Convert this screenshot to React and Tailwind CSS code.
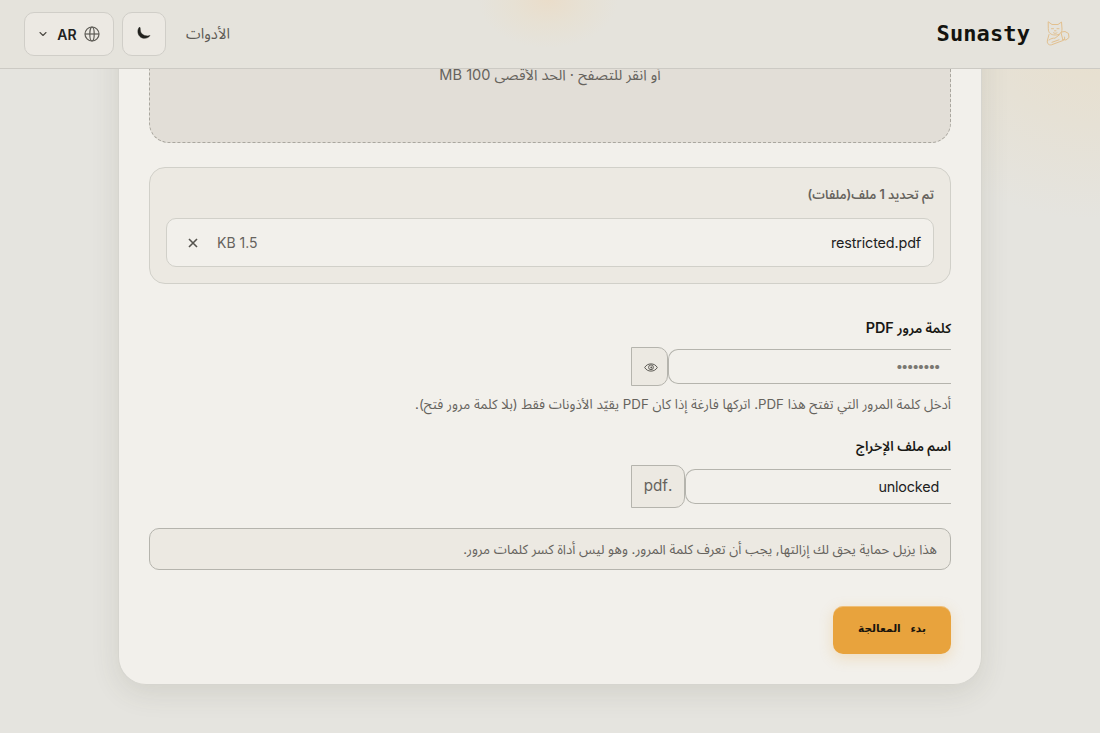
import React from 'react';
import { ChevronDown } from 'lucide-react';

const FILES = [{ name: 'restricted.pdf', size: '1.5 KB' }];

export default function App() {
  return (
    <div
      dir="rtl"
      className="h-[733px] overflow-hidden bg-[#e5e4df] bg-[radial-gradient(ellipse_230px_190px_at_1100px_30px,#e8dfcd_0%,#e6e1d5_50%,#e5e4df_100%)] font-['Inter','Noto_Sans_Arabic','Noto_Sans','DejaVu_Sans',sans-serif] text-[#21211d]"
    >
      <Header />
      <main className="-mt-[69px] px-[118px]">
        <section className="h-[685px] rounded-b-[28px] border border-t-0 border-[#d6d5cf] bg-[#f2f0eb] px-[30px] shadow-[0_8px_28px_rgba(70,70,50,0.12)]">
          <div className="h-[143px] rounded-b-[20px] border border-t-0 border-dashed border-[#aaa79f] bg-[#e2ded7] pt-16 text-center">
            <p className="text-[14.55px] leading-[22px] text-[#66635d]">أو انقر للتصفح · الحد الأقصى 100 MB</p>
          </div>

          <FileList files={FILES} />

          <Field
            label={
              <>
                كلمة مرور <span className="text-[14.4px]">PDF</span>
              </>
            }
            className="mt-[34px]"
          >
            <div className="mt-[9px] flex h-[39px] w-[320px] items-center">
              <div className="flex h-[35px] flex-1 items-center rounded-l-[10px] border border-r-0 border-[#b5b4ad] px-3 text-[#7a7872]">
                <span className="text-[13px] tracking-[-1.9px]">••••••••</span>
              </div>
              <button className="flex h-[39px] w-[37px] items-center justify-center rounded-r-[10px] border border-[#b5b4ad] bg-[#ece9e2] text-[#5d5b55]">
                <EyeIcon />
              </button>
            </div>
            <p className="mt-2 text-[13.32px] leading-5 text-[#66635d]">
              أدخل كلمة المرور التي تفتح هذا PDF. اتركها فارغة إذا كان PDF يقيّد الأذونات فقط (بلا كلمة مرور فتح).
            </p>
          </Field>

          <Field label="اسم ملف الإخراج" className="mt-[22px]">
            <div className="mt-[9px] flex h-[43px] w-[320px] items-center">
              <div className="flex h-[35px] flex-1 items-center rounded-l-[10px] border border-r-0 border-[#b5b4ad] px-3 text-[14.4px] tracking-[-0.2px]">
                unlocked
              </div>
              <span className="flex h-[43px] w-[54px] items-center justify-center rounded-r-[10px] border border-[#b5b4ad] bg-[#ece9e2] text-[15.2px] text-[#66635d]">
                .pdf
              </span>
            </div>
          </Field>

          <p className="mt-5 flex h-[42px] items-center rounded-[10px] border border-[#b5b4ad] bg-[#ece9e2] px-[13px] pt-px text-[13.28px] text-[#66635d]">
            هذا يزيل حماية يحق لك إزالتها, يجب أن تعرف كلمة المرور. وهو ليس أداة كسر كلمات مرور.
          </p>

          <button className="mt-9 flex h-12 w-[118px] items-center justify-center rounded-[10px] bg-[#e8a33d] pb-0.5 font-['DejaVu_Sans',sans-serif] text-[10.6px] font-bold [word-spacing:6px] text-[#17140d] shadow-[0_4px_14px_rgba(232,163,61,0.25),inset_0_1px_0_rgba(255,255,255,0.3)]">
            بدء المعالجة
          </button>
        </section>
      </main>
    </div>
  );
}

function Header() {
  return (
    <header className="relative z-10 flex h-[69px] items-center justify-between border-b border-[#cccac4] bg-[#e5e3dc] bg-[radial-gradient(ellipse_70px_48px_at_548px_0px,#eaddca_0%,#e7e1d4_50%,#e5e3dc_100%)] pr-[29px] pl-6">
      <div className="flex items-center gap-[13px]">
        <CatLogo />
        <span className="-mt-px font-['DejaVu_Sans_Mono',monospace] text-[22px] font-bold tracking-[0.1px] text-[#13130f]">Sunasty</span>
      </div>
      <nav className="flex items-center gap-2">
        <a className="ml-3 text-[14.8px] text-[#5d5b55]">الأدوات</a>
        <button className="flex h-11 w-11 items-center justify-center rounded-[10px] border border-[#d0cec8] bg-[#ece9e3]">
          <svg className="-mt-0.5" width="14" height="14" viewBox="0 0 14 14">
            <path d="M2.7 1C1.4 2.1.9 3.6.9 5.500c0 3.900 2.800 6.800 6.500 6.800 2.500 0 4.400-1 5.600-2.800-.9.3-1.700.4-2.500.4C6.200 9.900 3.300 7.300 3.300 3.800c0-1.100-.1-2-.6-2.800Z" fill="#21211d" stroke="#21211d" strokeWidth="0.500" />
          </svg>
        </button>
        <button dir="ltr" className="flex h-11 w-[90px] items-center rounded-[10px] border border-[#d0cec8] bg-[#ece9e3] pl-3">
          <ChevronDown size={12} strokeWidth={2.2} className="text-[#4b4943]" />
          <span className="ml-2 w-5 text-[14px] font-semibold">AR</span>
          <GlobeIcon />
        </button>
      </nav>
    </header>
  );
}

function FileList({ files }) {
  return (
    <div className="mt-6 h-[117px] rounded-2xl border border-[#d1d0c9] bg-[#ece9e2] px-4 pt-4">
      <p className="text-[12.6px] leading-[22px] font-semibold text-[#66635d]">تم تحديد {files.length} ملف(ملفات)</p>
      {files.map((file) => (
        <div key={file.name} className="mt-3 flex h-[49px] items-center rounded-[10px] border border-[#d1d0c9] bg-[#f2f0eb] px-3">
          <span className="text-[14.4px] tracking-[-0.15px]">{file.name}</span>
          <span className="mr-auto text-[14px] text-[#66635d]">{file.size}</span>
          <svg className="mr-[19px] ml-[9px]" width="10" height="10" viewBox="0 0 10 10" fill="none" stroke="#55534e" strokeWidth="1.6">
            <path d="m1 1 8 8M9 1 1 9" />
          </svg>
        </div>
      ))}
    </div>
  );
}

function Field({ label, className, children }) {
  return (
    <div className={className}>
      <label className="block h-5 text-[13.4px] leading-5 font-semibold text-[#181814]">{label}</label>
      {children}
    </div>
  );
}

function GlobeIcon() {
  return (
    <svg className="ml-[7px]" width="16" height="16" viewBox="0 0 16 16" fill="none" stroke="#5d5b55" strokeWidth="1.2">
      <circle cx="8" cy="8" r="7" />
      <ellipse cx="8" cy="8" rx="2.2" ry="7" />
      <path d="M1 8h14" />
    </svg>
  );
}

function EyeIcon() {
  return (
    <svg className="mt-0.5 ml-0.5" width="14" height="9" viewBox="0 0 14 9" fill="none" stroke="currentColor">
      <path d="M.7 4.5C2 2.2 4.2.9 7 .9s5 1.3 6.3 3.6C12 6.8 9.8 8.1 7 8.1S2 6.8.7 4.5Z" />
      <circle cx="7" cy="4.3" r="2.4" />
      <circle cx="7.3" cy="4.5" r="1" fill="currentColor" stroke="none" />
    </svg>
  );
}

function CatLogo() {
  return (
    <svg width="28" height="28" viewBox="0 0 28 28" fill="none" stroke="#e2c08f" strokeWidth="1" strokeLinejoin="round" strokeLinecap="round">
      {/* head */}
      <path d="M5.500 2 9 4.500h6L18.500 2l.5 7c0 4-2.500 6-6.800 6S5.300 13 5.300 9Z" />
      <path d="M8.500 8.700h2M14 8.700h2M11.500 10.800h1.500M10.500 12.800c1 .8 2.500.8 3.500 0" />
      {/* body, paws and tail */}
      <path d="M6 14.500 4.500 20c-.8 3 .8 5.500 4 4.800L20 20.500c1.500-.6 2-2 1.500-3.500" />
      <path d="M6 20c2-1.500 4-2 6-1.800l4.500-3.500M9 22.300l7-2.500" />
      <path d="M18.500 12 22 11.500l3.500 2 .5 4-3 2.500-3.500-.5M18 12.500l1.500 6" />
    </svg>
  );
}
